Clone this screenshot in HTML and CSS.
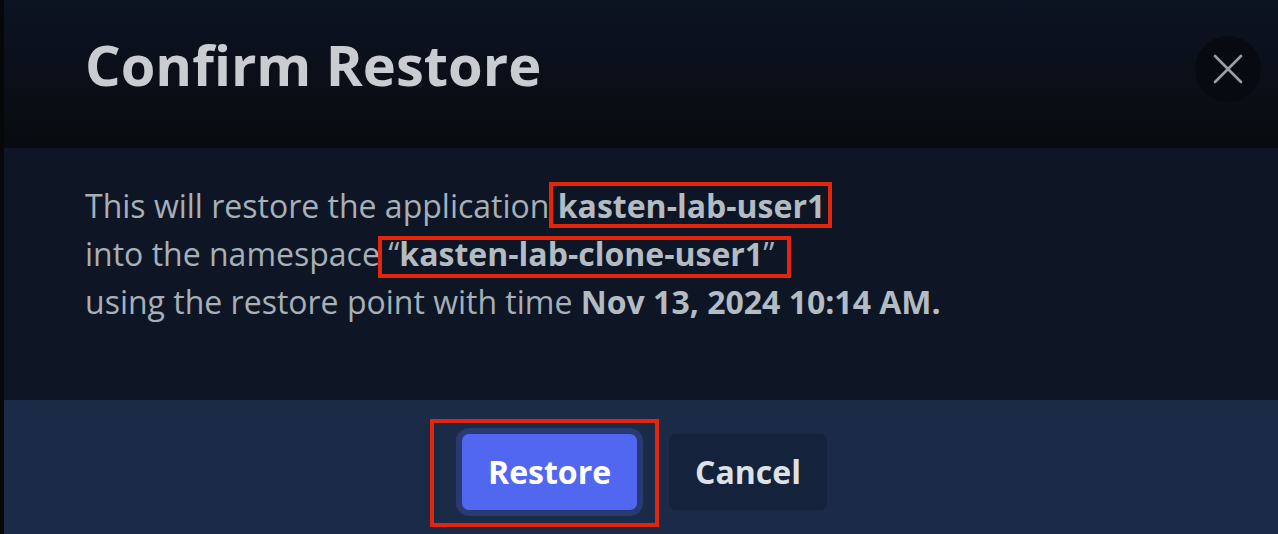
FILE: index.html
```html
<!DOCTYPE html>
<html lang="en">
<head>
<meta charset="utf-8">
<title>Confirm Restore</title>
<link rel="stylesheet" href="styles.css">
</head>
<body>
<div class="screen">
  <div class="edge"></div>
  <div class="dialog">
    <header class="head">
      <h1 class="title">Confirm Restore</h1>
      <button class="close" aria-label="Close">
        <svg width="30" height="30" viewBox="0 0 30 30" fill="none" stroke="#9a9ea5" stroke-width="2.6" stroke-linecap="round">
          <path d="M2 2 L28 28 M28 2 L2 28"/>
        </svg>
      </button>
    </header>
    <div class="body">
      <p class="msg">This will restore the application <span class="mark mark-app"><b>kasten-lab-user1</b></span><br>into the namespace <span class="mark mark-ns">“<b>kasten-lab-clone-user1</b>”</span><br>using the restore point with time <b>Nov 13, 2024 10:14 AM.</b></p>
    </div>
    <footer class="foot">
      <span class="mark mark-btn"><button class="btn primary">Restore</button></span>
      <button class="btn secondary">Cancel</button>
    </footer>
  </div>
</div>
</body>
</html>
```

FILE: styles.css
```css
* { box-sizing: border-box; }
html, body { margin: 0; padding: 0; }
body {
  width: 1278px;
  height: 534px;
  overflow: hidden;
  background: #050709;
  font-family: "Open Sans", "Noto Sans", sans-serif;
}
.screen {
  display: flex;
  width: 1278px;
  height: 534px;
}
.edge {
  width: 4px;
  flex: none;
  background: #050709;
}
.dialog {
  flex: 1;
  display: flex;
  flex-direction: column;
}
.head {
  height: 148px;
  flex: none;
  display: flex;
  justify-content: space-between;
  align-items: flex-start;
  background: linear-gradient(180deg, #0c1322 0%, #0a0f18 55%, #080c10 100%);
}
.title {
  margin: 0;
  padding: 31px 0 0 81px;
  font-size: 56px;
  line-height: 1.2;
  font-weight: 700;
  color: #c9cdd2;
}
.close {
  margin: 36px 17px 0 0;
  width: 66px;
  height: 66px;
  border-radius: 50%;
  border: none;
  padding: 0;
  background: #070b11;
  display: flex;
  align-items: center;
  justify-content: center;
}
.body {
  height: 252px;
  flex: none;
  background: #0e1626;
  padding: 34px 0 0 81px;
}
.msg {
  margin: 0;
  font-size: 32px;
  line-height: 48px;
  color: #a7afb7;
}
.msg b {
  font-weight: 700;
  color: #b3bbc3;
}
.mark {
  position: relative;
}
.mark::after {
  content: "";
  position: absolute;
  border: 4px solid #e3250c;
  pointer-events: none;
}
.mark-app::after {
  left: -9px;
  right: -7px;
  top: -2px;
  bottom: -1px;
}
.mark-ns::after {
  left: -10px;
  right: -17px;
  top: 4px;
  bottom: -3px;
}
.foot {
  flex: 1;
  background: #1a2a47;
  display: flex;
  justify-content: center;
  align-items: flex-start;
  gap: 32px;
  padding: 34px 0 0 7px;
}
.mark-btn {
  display: block;
}
.mark-btn::after {
  left: -32px;
  right: -22px;
  top: -15px;
  bottom: -17px;
}
.btn {
  font-family: "Open Sans", "Noto Sans", sans-serif;
  font-size: 32px;
  line-height: 48px;
  font-weight: 700;
  padding: 14px 26px;
  border: none;
  border-radius: 7px;
  display: block;
}
.primary {
  background: #5267f0;
  color: #ffffff;
  box-shadow: 0 0 0 6px #273a72;
}
.secondary {
  background: #15223b;
  color: #dde1e8;
}
```
